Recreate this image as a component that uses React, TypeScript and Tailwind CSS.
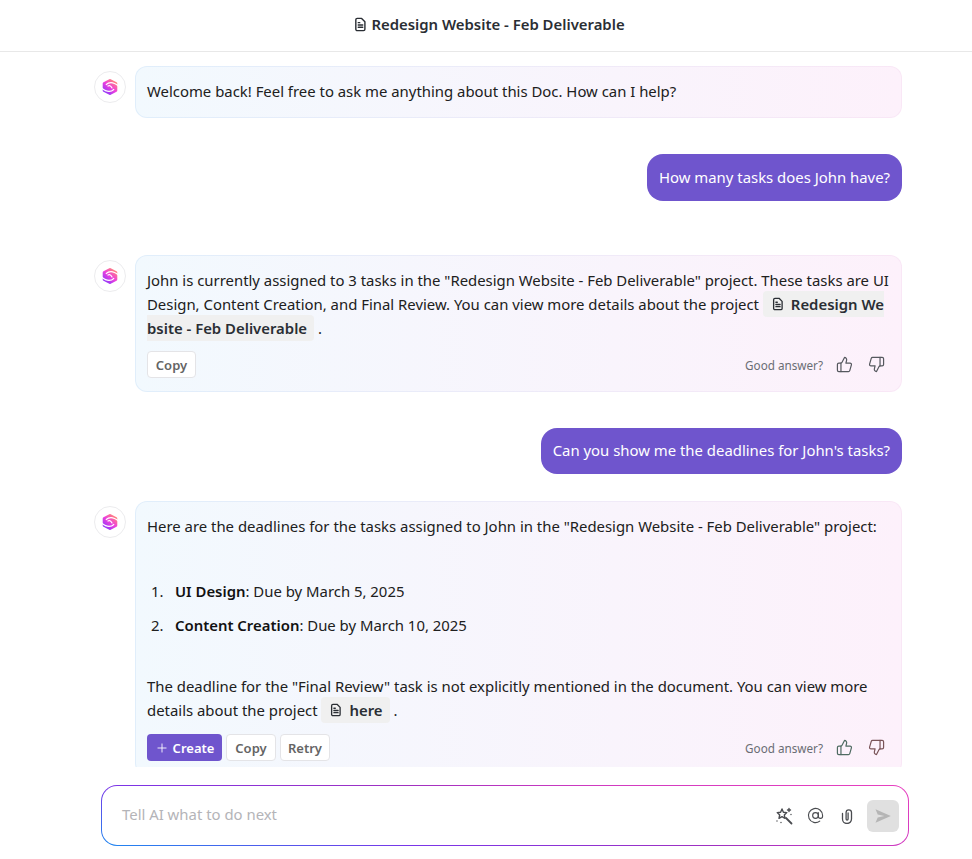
import React from 'react';
import { Plus, ThumbsDown, ThumbsUp, AtSign } from 'lucide-react';

function DocIcon({ className }: { className?: string }) {
  return (
    <svg viewBox="0 0 16 16" fill="none" stroke="currentColor" strokeWidth="1.5" strokeLinecap="round" strokeLinejoin="round" className={className}>
      <path d="M4.5 1.5h4.7l3.500 3.500v8c0 .9-.7 1.500-1.500 1.500h-6.700c-.8 0-1.500-.6-1.500-1.500V3c0-.8.7-1.500 1.500-1.500z" />
      <path d="M5.600 6h1.600M5.600 8.600h4.800M5.600 11h4.800" />
    </svg>
  );
}

function BrainLogo() {
  return (
    <svg viewBox="0 0 18 18" fill="none" strokeLinecap="round" strokeLinejoin="round" className="h-[18px] w-[18px]">
      <defs>
        <linearGradient id="logo" x1="0.1" y1="0.9" x2="0.8" y2="0">
          <stop offset="0" stopColor="#9a38f7" />
          <stop offset="0.5" stopColor="#ee3fdc" />
          <stop offset="1" stopColor="#ff8080" />
        </linearGradient>
      </defs>
      <path d="M9 2.500l5.800 3v7L9 15.500l-5.800-3v-7z" fill="url(#logo)" stroke="url(#logo)" strokeWidth="3" />
      <path d="M17.500 8C15 6 12.500 4.600 10 4.600 8 4.600 6.500 5.200 5.400 6.400" stroke="#fff" strokeWidth="1.400" />
      <path d="M.5 10c2.500 2 5 3.400 7.500 3.400 2 0 3.500-.6 4.600-1.800" stroke="#fff" strokeWidth="1.400" />
      <path d="M7 8c1.200-.6 2.800-.6 4 2" stroke="#fff" strokeWidth="1.200" />
    </svg>
  );
}

function Avatar() {
  return (
    <div className="flex h-8 w-8 shrink-0 items-center justify-center rounded-full border border-[#ececee] bg-white">
      <BrainLogo />
    </div>
  );
}

function Bubble({ children }: { children: React.ReactNode }) {
  return (
    <div className="w-[767px] rounded-xl bg-gradient-to-r from-[#e0eefb] to-[#f9e7f6] p-px">
      <div className="rounded-[11px] bg-gradient-to-r from-[#f2f9fe] to-[#fdf1fb] px-[11px] text-[14.9px] leading-6 text-[#202020]">
        {children}
      </div>
    </div>
  );
}

function Chip({ children, broken }: { children: React.ReactNode; broken?: boolean }) {
  return (
    <span className={`rounded bg-[#f0f0f0] py-[3px] pl-2 pr-[7px] font-semibold text-[#2a2e34] ${broken ? 'break-all' : ''}`}>
      <DocIcon className="mr-[6px] inline-block h-[14px] w-[14px] align-[-1px]" />
      {children}
    </span>
  );
}

function SmallButton({ label, width }: { label: string; width: string }) {
  return (
    <button className={`flex h-[27px] items-center justify-center rounded border border-[#e4e4e7] bg-white text-[13px] font-semibold text-[#646464] ${width}`}>
      {label}
    </button>
  );
}

function Feedback({ tinted }: { tinted?: boolean }) {
  return (
    <div className="flex items-center text-[#55585e]">
      <span className="mr-[13px] text-[11.7px] text-[#6a6d74]">Good answer?</span>
      <ThumbsUp className={`mr-[15px] h-[17px] w-[17px] ${tinted ? 'text-[#4f6b62]' : ''}`} strokeWidth={1.7} />
      <ThumbsDown className={`mr-[5px] h-[17px] w-[17px] ${tinted ? 'text-[#7a5458]' : ''}`} strokeWidth={1.7} />
    </div>
  );
}

function UserMessage({ children, height }: { children: React.ReactNode; height: string }) {
  return (
    <div className="flex justify-end">
      <div className={`flex items-center rounded-2xl bg-[#6f55cd] px-3 pb-[2px] text-[14.9px] leading-6 text-white ${height}`}>{children}</div>
    </div>
  );
}

export default function App() {
  return (
    <div className="flex h-[859px] w-[972px] flex-col overflow-hidden bg-white font-['Noto_Sans',sans-serif]">
      <header className="flex h-[52px] shrink-0 items-center justify-center gap-[3px] border-b border-[#e8e8e8] pb-[3px] pl-[6px] text-[14.9px] font-semibold text-[#2a2e34]">
        <DocIcon className="h-[15px] w-[15px]" />
        Redesign Website - Feb Deliverable
      </header>

      <main className="h-[715px] shrink-0 overflow-hidden pl-[94px] pr-[70px] pt-[14px]">
        <div className="flex justify-between">
          <div className="pt-[5px]"><Avatar /></div>
          <Bubble>
            <p className="pb-[14px] pt-3">Welcome back! Feel free to ask me anything about this Doc. How can I help?</p>
          </Bubble>
        </div>

        <div className="mt-9"><UserMessage height="h-[47px]">How many tasks does John have?</UserMessage></div>

        <div className="mt-[54px] flex justify-between">
          <div className="pt-[5px]"><Avatar /></div>
          <Bubble>
            <p className="pt-3">
              John is currently assigned to 3 tasks in the "Redesign Website - Feb Deliverable" project. These tasks are UI Design, Content Creation, and Final Review. You can view more details about the project{' '}
              <Chip broken>Redesign Website - Feb Deliverable</Chip> .
            </p>
            <div className="mt-[11px] flex items-center justify-between pb-[13px]">
              <SmallButton label="Copy" width="w-[49px]" />
              <Feedback />
            </div>
          </Bubble>
        </div>

        <div className="mt-9"><UserMessage height="h-[46px]">Can you show me the deadlines for John's tasks?</UserMessage></div>

        <div className="mt-[27px] flex justify-between">
          <div className="pt-[5px]"><Avatar /></div>
          <Bubble>
            <p className="pt-3">Here are the deadlines for the tasks assigned to John in the "Redesign Website - Feb Deliverable" project:</p>
            <ol className="mt-[41px]">
              <li className="flex">
                <span className="w-7 pl-1">1.</span>
                <span><strong className="font-semibold text-[#111]">UI Design</strong>: Due by March 5, 2025</span>
              </li>
              <li className="mt-[10px] flex">
                <span className="w-7 pl-1">2.</span>
                <span><strong className="font-semibold text-[#111]">Content Creation</strong>: Due by March 10, 2025</span>
              </li>
            </ol>
            <p className="mt-[37px]">
              The deadline for the "Final Review" task is not explicitly mentioned in the document. You can view more details about the project{' '}
              <Chip>here</Chip> .
            </p>
            <div className="mt-3 flex items-center justify-between pb-[13px]">
              <div className="flex gap-1">
                <button className="flex h-[27px] w-[75px] items-center justify-center gap-1 rounded bg-[#6f55cd] text-[13px] font-semibold text-white">
                  <Plus className="h-[14px] w-[14px]" strokeWidth={1.5} />
                  Create
                </button>
                <SmallButton label="Copy" width="w-[50px]" />
                <SmallButton label="Retry" width="w-[50px]" />
              </div>
              <Feedback tinted />
            </div>
          </Bubble>
        </div>
      </main>

      <div className="pl-[101px] pt-[18px]">
        <div className="h-[61px] w-[808px] rounded-2xl bg-[linear-gradient(11deg,#1e88f0_0%,#7a35e8_28%,#a030c0_55%,#d03ac0_72%,#e840c0_100%)] p-px">
          <div className="flex h-full items-center rounded-[15px] bg-white pl-5 pr-[9px]">
            <span className="flex-1 pb-[3px] text-[14.9px] text-[#b4b4b8]">Tell AI what to do next</span>
            <svg viewBox="0 0 18 18" fill="none" stroke="#4a4c50" strokeWidth="1.4" strokeLinecap="round" strokeLinejoin="round" className="h-[18px] w-[18px]">
              <path d="M7 2l1.400 3.200 3.400.4-2.500 2.300.7 3.400L7 9.600l-3 1.700.7-3.400-2.500-2.300 3.400-.4z" />
              <path d="M11 11l5.500 5.500" strokeWidth="1.800" />
              <path d="M14 1.500v3M12.500 3H15.500M16 7.500v.1M2 14v.1M6 15.500v.1" />
            </svg>
            <AtSign className="ml-[14px] h-[17px] w-[17px] text-[#4a4c50]" strokeWidth={1.6} />
            <svg viewBox="0 0 16 16" fill="none" stroke="#4a4c50" strokeWidth="1.3" strokeLinecap="round" className="ml-[15px] h-4 w-4">
              <path d="M3.500 5.500v5.500a4.500 4.500 0 0 0 9 0V4.500a2.700 2.700 0 0 0-5.400 0v6.500a1 1 0 0 0 2 0V5" />
            </svg>
            <button className="ml-3 flex h-8 w-8 items-center justify-center rounded-md bg-[#e0e0e0]">
              <svg viewBox="0 0 18 18" className="h-[18px] w-[18px]" fill="#b5b5b5">
                <path d="M1.500 2.200 16.800 9 1.500 15.800l2.200-5.400 6.600-1.400-6.600-1.400z" />
              </svg>
            </button>
          </div>
        </div>
      </div>
    </div>
  );
}
